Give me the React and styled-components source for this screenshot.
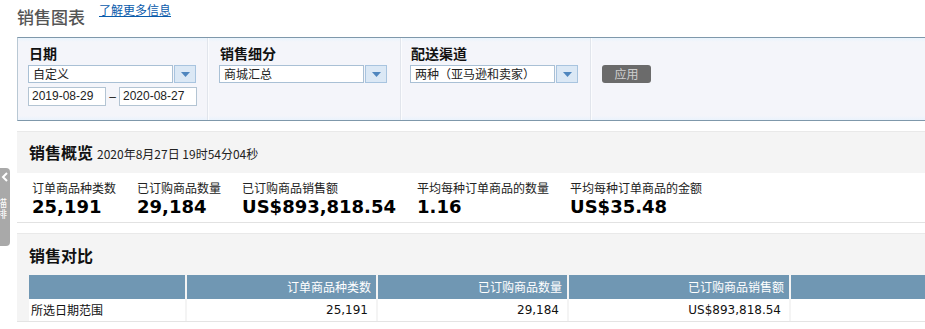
import React from 'react';
import styled, { createGlobalStyle } from 'styled-components';

const GlobalStyle = createGlobalStyle`
  html, body {
    margin: 0;
    padding: 0;
    background: #fff;
    overflow: hidden;
  }
  body {
    font-family: "Noto Sans CJK SC", "Liberation Sans", sans-serif;
    color: #111;
  }
`;

const Page = styled.div`
  position: relative;
  width: 1040px;
  padding: 0 0 0 17px;
`;

const TitleRow = styled.div`
  display: flex;
  align-items: flex-start;
  height: 37px;
`;

const Title = styled.h1`
  margin: 5px 0 0;
  font-size: 17px;
  font-weight: 500;
  line-height: 24px;
  color: #555;
`;

const InfoLink = styled.a`
  margin: 1px 0 0 14px;
  font-size: 12px;
  line-height: 18px;
  color: #0a5bab;
  text-decoration: underline;
`;

const FilterBox = styled.div`
  display: flex;
  height: 82px;
  border-top: 1px solid #7f98ab;
  border-bottom: 1px solid #7f98ab;
  border-left: 1px solid #b9c8d4;
  background: linear-gradient(#e9f4fd 0, #f4f5fa 4px, #f4f5fa 78px, #eaf3fc 82px);
`;

const FilterColumn = styled.div`
  width: ${p => p.$width}px;
  flex: ${p => (p.$grow ? 1 : 'none')};
  box-sizing: border-box;
  padding: ${p => p.$top || 5}px 10px 0 ${p => p.$left || 10}px;
  border-right: ${p => (p.$grow ? 'none' : '1px solid #e1e5ec')};
  box-shadow: ${p => (p.$grow ? 'none' : '1px 0 0 #fbfcfe')};
`;

const FilterLabel = styled.div`
  font-size: 14px;
  font-weight: 700;
  line-height: 20px;
  color: #111;
  padding-left: 1px;
`;

const SelectBox = styled.div`
  display: flex;
  margin-top: 2px;
  height: 18px;
`;

const SelectValue = styled.div`
  width: 145px;
  box-sizing: border-box;
  border: 1px solid #a9c0d5;
  background: #fff;
  font-size: 12px;
  line-height: 16px;
  padding-left: 4px;
  color: #222;
  white-space: nowrap;
`;

const SelectButton = styled.div`
  width: 22px;
  box-sizing: border-box;
  margin-left: 1px;
  border: 1px solid #a8c4df;
  background: #dbe8f5;
  display: flex;
  align-items: center;
  justify-content: center;
`;

const DateRow = styled.div`
  display: flex;
  align-items: center;
  margin-top: 4px;
`;

const DateInput = styled.div`
  width: 78px;
  height: 19px;
  box-sizing: border-box;
  border: 1px solid #b3c4d3;
  background: #fff;
  font-family: "Liberation Sans", sans-serif;
  font-size: 12px;
  line-height: 17px;
  padding-left: 3px;
  color: #222;
`;

const Dash = styled.span`
  width: 13px;
  text-align: center;
  font-family: "Liberation Sans", sans-serif;
  font-size: 12px;
  color: #222;
`;

const ApplyButton = styled.button`
  width: 49px;
  height: 18px;
  border: none;
  border-radius: 3px;
  background: #6b6b6b;
  color: #cfcfcf;
  font-family: "Noto Sans CJK SC", sans-serif;
  font-size: 12px;
  line-height: 18px;
  padding: 0;
`;

const Section = styled.section`
  margin-top: ${p => p.$gap}px;
  border-top: 1px solid #e9e9e9;
`;

const SectionHead = styled.div`
  display: flex;
  align-items: baseline;
  height: ${p => p.$h}px;
  box-sizing: border-box;
  padding: ${p => p.$pt}px 0 0 ${p => p.$pl ?? 12}px;
  background: #f4f4f4;
`;

const SectionTitle = styled.h2`
  margin: 0;
  font-size: 16px;
  font-weight: 700;
  line-height: 22px;
  color: #111;
`;

const Stamp = styled.span`
  margin-left: 4px;
  font-size: 12px;
  color: #222;
`;

const Metrics = styled.div`
  display: flex;
  gap: 21px;
  height: 50px;
  box-sizing: border-box;
  padding: 7px 0 0 15px;
  border-bottom: 1px solid #e2e2e2;
`;

const Metric = styled.div`
  display: flex;
  flex-direction: column;
`;

const MetricLabel = styled.div`
  font-size: 12px;
  line-height: 16px;
  color: #222;
  white-space: nowrap;
`;

const MetricValue = styled.div`
  font-family: "DejaVu Sans", "Liberation Sans", sans-serif;
  font-size: 18px;
  font-weight: 700;
  line-height: 22px;
  color: #000;
  white-space: nowrap;
`;

const Compare = styled.div`
  background: #f4f4f4;
  padding-left: 12px;
`;

const Grid = styled.div`
  display: grid;
  grid-template-columns: 156px 189px 189px 220px 1fr;
  column-gap: 2px;
`;

const HeadCell = styled.div`
  height: 24px;
  background: #7097b3;
  color: #fff;
  font-size: 12px;
  line-height: 24px;
  text-align: right;
  padding-right: 5px;
`;

const Cell = styled.div`
  height: 22px;
  background: #fff;
  font-family: ${p => (p.$num ? '"DejaVu Sans", sans-serif' : '"Noto Sans CJK SC", sans-serif')};
  font-size: 12px;
  line-height: 22px;
  text-align: ${p => (p.$num ? 'right' : 'left')};
  padding: 0 8px 0 2px;
  color: #111;
  white-space: nowrap;
`;

const RowLine = styled.div`
  border-bottom: 1px solid #e4e4e4;
  margin-left: -12px;
`;

const SideTab = styled.div`
  position: absolute;
  left: 0;
  top: 168px;
  width: 10px;
  height: 78px;
  overflow: hidden;
  background: #a9a9a9;
  border-radius: 0 4px 4px 0;
  color: #fff;
`;

const TabArrow = styled.svg`
  display: block;
  margin: 4px 0 0 1px;
`;

const TabText = styled.div`
  margin: 15px 0 0 -3px;
  width: 11px;
  font-size: 10px;
  line-height: 11px;
  word-break: break-all;
`;

const Caret = () => (
  <svg width="9" height="5" viewBox="0 0 9 5">
    <path d="M0 0h9L4.5 5z" fill="#4f86be" />
  </svg>
);

const Select = ({ value }) => (
  <SelectBox>
    <SelectValue>{value}</SelectValue>
    <SelectButton>
      <Caret />
    </SelectButton>
  </SelectBox>
);

const metrics = [
  { label: '订单商品种类数', value: '25,191' },
  { label: '已订购商品数量', value: '29,184' },
  { label: '已订购商品销售额', value: 'US$893,818.54' },
  { label: '平均每种订单商品的数量', value: '1.16' },
  { label: '平均每种订单商品的金额', value: 'US$35.48' },
];

const columns = ['', '订单商品种类数', '已订购商品数量', '已订购商品销售额', ''];
const row = ['所选日期范围', '25,191', '29,184', 'US$893,818.54', ''];

const App = () => (
  <Page>
    <GlobalStyle />
    <SideTab>
      <TabArrow width="8" height="10" viewBox="0 0 8 10">
        <path d="M6 1L2 5l4 4" fill="none" stroke="#fff" strokeWidth="2" />
      </TabArrow>
      <TabText>描排</TabText>
    </SideTab>

    <TitleRow>
      <Title>销售图表</Title>
      <InfoLink href="#">了解更多信息</InfoLink>
    </TitleRow>

    <FilterBox>
      <FilterColumn $width={190}>
        <FilterLabel>日期</FilterLabel>
        <Select value="自定义" />
        <DateRow>
          <DateInput>2019-08-29</DateInput>
          <Dash>–</Dash>
          <DateInput>2020-08-27</DateInput>
        </DateRow>
      </FilterColumn>
      <FilterColumn $width={193} $left={11}>
        <FilterLabel>销售细分</FilterLabel>
        <Select value="商城汇总" />
      </FilterColumn>
      <FilterColumn $width={190} $left={9}>
        <FilterLabel>配送渠道</FilterLabel>
        <Select value="两种（亚马逊和卖家）" />
      </FilterColumn>
      <FilterColumn $grow $top={22} $left={11}>
        <ApplyButton>应用</ApplyButton>
      </FilterColumn>
    </FilterBox>

    <Section $gap={10}>
      <SectionHead $h={41} $pt={9}>
        <SectionTitle>销售概览</SectionTitle>
        <Stamp>2020年8月27日 19时54分04秒</Stamp>
      </SectionHead>
      <Metrics>
        {metrics.map(m => (
          <Metric key={m.label}>
            <MetricLabel>{m.label}</MetricLabel>
            <MetricValue>{m.value}</MetricValue>
          </Metric>
        ))}
      </Metrics>
    </Section>

    <Section $gap={10}>
      <Compare>
        <SectionHead $h={41} $pt={10} $pl={0}>
          <SectionTitle>销售对比</SectionTitle>
        </SectionHead>
        <Grid>
          {columns.map((c, i) => (
            <HeadCell key={i}>{c}</HeadCell>
          ))}
          {row.map((c, i) => (
            <Cell key={i} $num={i > 0}>
              {c}
            </Cell>
          ))}
        </Grid>
        <RowLine />
      </Compare>
    </Section>
  </Page>
);

export default App;
